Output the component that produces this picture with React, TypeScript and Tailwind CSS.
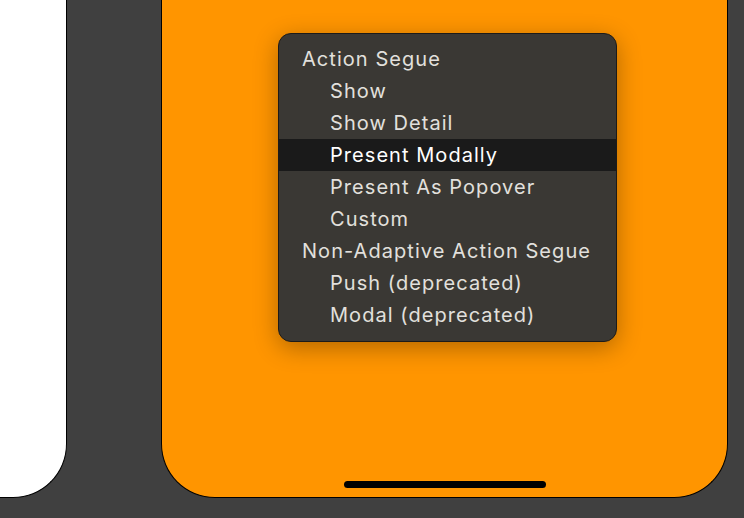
import React from "react";

const items: { label: string; indent: boolean; selected?: boolean }[] = [
  { label: "Action Segue", indent: false },
  { label: "Show", indent: true },
  { label: "Show Detail", indent: true },
  { label: "Present Modally", indent: true, selected: true },
  { label: "Present As Popover", indent: true },
  { label: "Custom", indent: true },
  { label: "Non-Adaptive Action Segue", indent: false },
  { label: "Push (deprecated)", indent: true },
  { label: "Modal (deprecated)", indent: true },
];

export default function App() {
  return (
    <div
      className="w-[744px] h-[518px] bg-[#404040] flex items-start overflow-hidden"
      style={{ fontFamily: "Inter, 'Noto Sans', sans-serif" }}
    >
      <div className="w-[67px] h-[498px] bg-white border-r border-b border-black rounded-br-[54px] shrink-0" />
      <div className="ml-[94px] w-[567px] h-[498px] bg-[#ff9500] border-l border-r border-b border-black rounded-b-[54px] shrink-0 flex flex-col">
        <div className="mt-[33px] ml-[116px] w-[339px] h-[309px] bg-[#3a3834] border border-[#1c1b19] rounded-[13px] py-[9px] shadow-[0_6px_24px_rgba(0,0,0,0.3)]">
          {items.map((it) => (
            <div
              key={it.label}
              className={
                "h-[32px] flex items-center text-[20px] leading-none tracking-[1.05px] whitespace-nowrap " +
                (it.indent ? "pl-[51px] " : "pl-[23px] ") +
                (it.selected ? "bg-[#1a1a1a] text-white" : "text-[#e2e0dd]")
              }
            >
              {it.label}
            </div>
          ))}
        </div>
        <div className="mt-auto mb-[9px] mx-auto w-[202px] h-[7px] rounded-full bg-black" />
      </div>
    </div>
  );
}
